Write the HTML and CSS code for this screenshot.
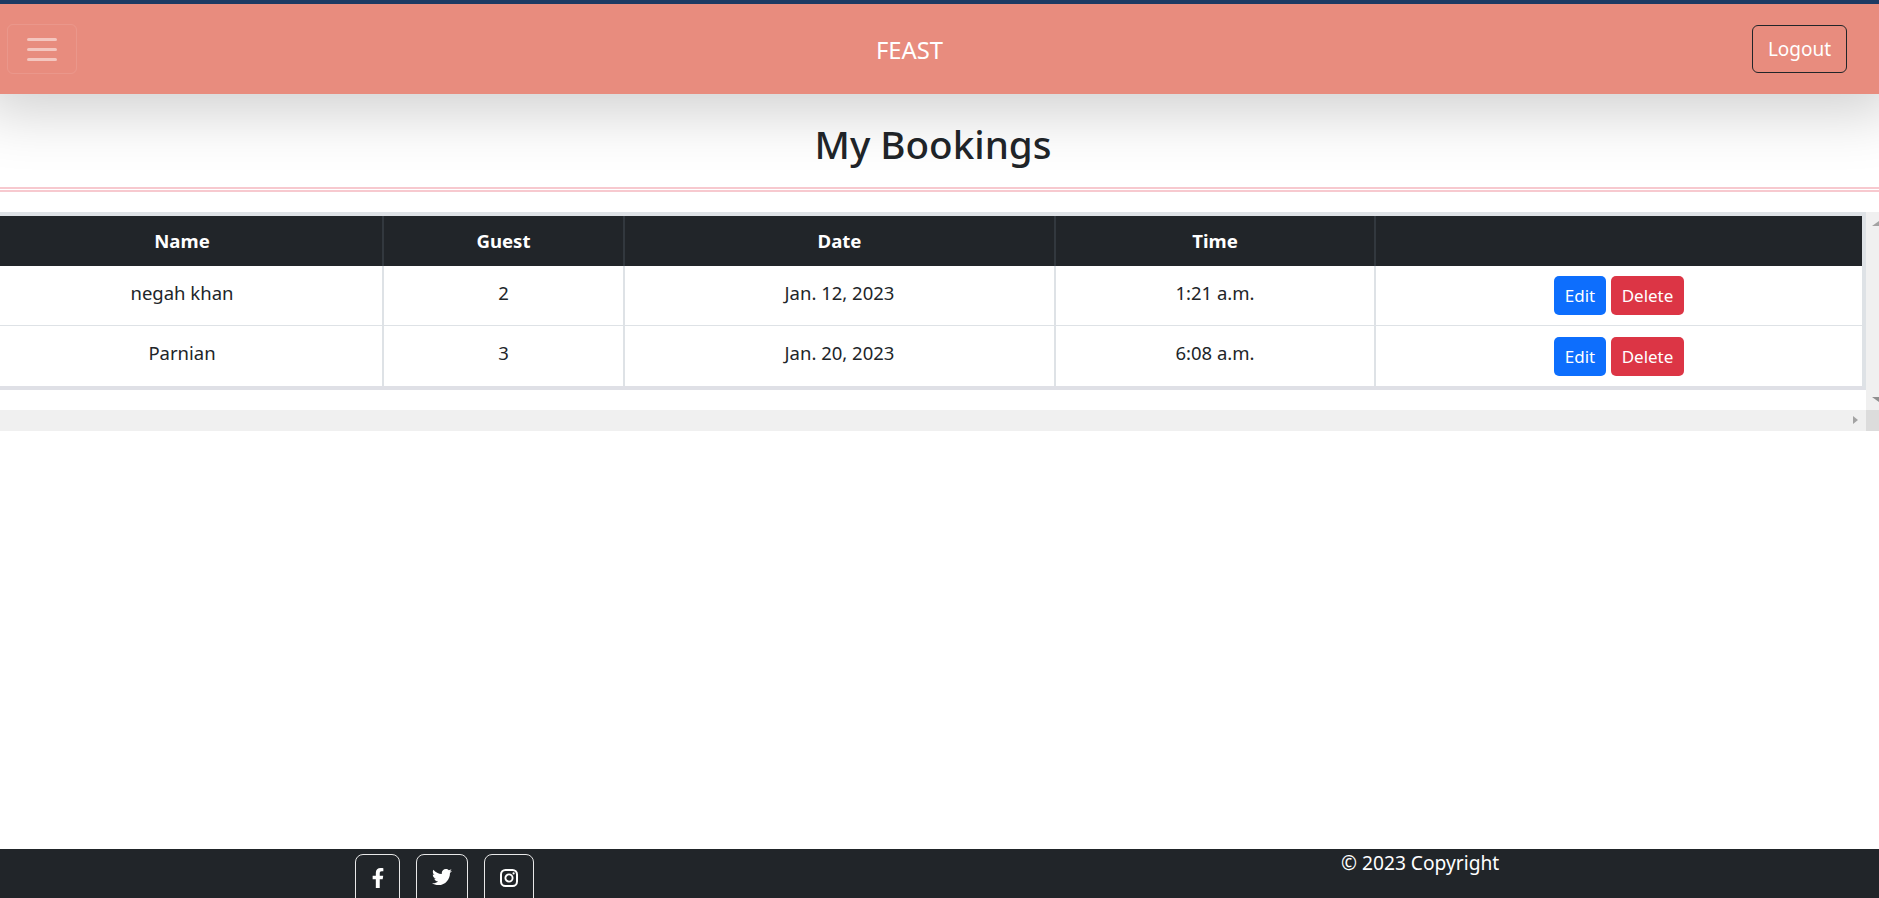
FILE: index.html
```html
<!DOCTYPE html>
<html lang="en">
<head>
<meta charset="utf-8">
<title>My Bookings</title>
<link rel="stylesheet" href="styles.css">
</head>
<body>
<header class="navbar">
  <button class="toggler" aria-label="Menu">
    <span class="bar"></span><span class="bar"></span><span class="bar"></span>
  </button>
  <a class="brand">FEAST</a>
  <button class="logout">Logout</button>
</header>
<main class="content">
  <h1 class="title">My Bookings</h1>
  <hr class="rule">
  <div class="scroller">
    <div class="pane">
      <div class="table-box">
        <table class="bookings">
          <colgroup>
            <col class="c1"><col class="c2"><col class="c3"><col class="c4"><col class="c5">
          </colgroup>
          <thead>
            <tr><th>Name</th><th>Guest</th><th>Date</th><th>Time</th><th></th></tr>
          </thead>
          <tbody>
            <tr>
              <td>negah khan</td><td>2</td><td>Jan. 12, 2023</td><td>1:21 a.m.</td>
              <td><div class="actions"><button class="btn edit">Edit</button><button class="btn del">Delete</button></div></td>
            </tr>
            <tr>
              <td>Parnian</td><td>3</td><td>Jan. 20, 2023</td><td>6:08 a.m.</td>
              <td><div class="actions"><button class="btn edit">Edit</button><button class="btn del">Delete</button></div></td>
            </tr>
          </tbody>
        </table>
      </div>
    </div>
    <div class="vbar"><span class="arrow up"></span><span class="arrow down"></span></div>
    <div class="hbar"><span class="arrow right"></span></div>
    <div class="corner"></div>
  </div>
</main>
<footer class="footer">
  <div class="social">
    <a class="soc fb"><svg class="ico" viewBox="0 0 320 512"><path fill="currentColor" d="M279.14 288l14.22-92.66h-88.91v-60.13c0-25.35 12.42-50.06 52.24-50.06h40.42V6.26S260.43 0 225.36 0c-73.22 0-121.08 44.38-121.08 124.72v70.62H22.89V288h81.39v224h100.17V288z"/></svg></a>
    <a class="soc tw"><svg class="ico" viewBox="0 0 512 512"><path fill="currentColor" d="M459.37 151.716c.325 4.548.325 9.097.325 13.645 0 138.72-105.583 298.558-298.558 298.558-59.452 0-114.68-17.219-161.137-47.106 8.447.974 16.568 1.299 25.34 1.299 49.055 0 94.213-16.568 130.274-44.832-46.132-.975-84.792-31.188-98.112-72.772 6.498.974 12.995 1.624 19.818 1.624 9.421 0 18.843-1.3 27.614-3.573-48.081-9.747-84.143-51.98-84.143-102.985v-1.299c13.969 7.797 30.214 12.67 47.431 13.319-28.264-18.843-46.781-51.005-46.781-87.391 0-19.492 5.197-37.36 14.294-52.954 51.655 63.675 129.3 105.258 216.365 109.807-1.624-7.797-2.599-15.918-2.599-24.04 0-57.828 46.782-104.934 104.934-104.934 30.213 0 57.502 12.67 76.67 33.137 23.715-4.548 46.456-13.32 66.599-25.34-7.798 24.366-24.366 44.833-46.132 57.827 21.117-2.273 41.584-8.122 60.426-16.243-14.292 20.791-32.161 39.308-52.628 54.253z"/></svg></a>
    <a class="soc ig"><svg class="ico ico-ig" viewBox="0 0 18 18"><rect x="1" y="1" width="16" height="16" rx="4.5" fill="none" stroke="currentColor" stroke-width="2"/><circle cx="9" cy="9" r="3.6" fill="none" stroke="currentColor" stroke-width="1.9"/><circle cx="13.6" cy="4.4" r="1.1" fill="currentColor"/></svg></a>
  </div>
  <p class="copy">© 2023 Copyright</p>
</footer>
</body>
</html>
```

FILE: styles.css
```css
* { box-sizing: border-box; }
html, body { height: 100%; }
body {
  margin: 0;
  height: 898px;
  display: flex;
  flex-direction: column;
  overflow: hidden;
  background: #fff;
  color: #212529;
  font-family: "Noto Sans", "Open Sans", "Liberation Sans", sans-serif;
  font-size: 18.5px;
}
button { font-family: inherit; cursor: pointer; }

.navbar {
  position: relative;
  z-index: 2;
  flex: none;
  height: 94px;
  border-top: 4px solid #1c3a63;
  background: #e88c7e;
  box-shadow: 0 0 60px 18px rgba(0, 0, 0, .19);
  display: grid;
  grid-template-columns: 1fr auto 1fr;
  align-items: center;
  padding: 0 32px 0 7px;
}
.toggler {
  justify-self: start;
  width: 70px;
  height: 50px;
  padding: 0;
  background: transparent;
  border: 1px solid rgba(255, 255, 255, .1);
  border-radius: 6px;
  display: flex;
  flex-direction: column;
  align-items: center;
  justify-content: center;
  gap: 7px;
}
.bar { width: 30px; height: 3px; border-radius: 1.5px; background: rgba(255, 255, 255, .5); }
.brand { color: #fff; font-size: 23.8px; margin: 2px 35px 0 0; }
.logout {
  justify-self: end;
  width: 95px;
  height: 48px;
  padding: 0;
  color: #fff;
  background: transparent;
  border: 1px solid #212529;
  border-radius: 6px;
  font-size: 19px;
}

.content { flex: 1; }
.title {
  margin: 0;
  height: 93px;
  padding: 19px 13px 0 0;
  text-align: center;
  font-size: 38.6px;
  font-weight: 500;
  line-height: 62px;
}
.rule { margin: 0 0 20px; height: 0; border: 0; border-top: 5px double #f7c9cf; }

.scroller {
  display: grid;
  grid-template-columns: 1fr 13px;
  grid-template-rows: 198px 21px;
}
.pane { overflow: hidden; }
.table-box {
  border-top: 4px solid #dee2e6;
  border-right: 4px solid #dee2e6;
  border-bottom: 4px solid #dfe0e6;
  overflow: hidden;
}
.bookings {
  table-layout: fixed;
  width: 1880px;
  margin-left: -18px;
  border-collapse: separate;
  border-spacing: 0;
  text-align: center;
}
.c1 { width: 402px; }
.c2 { width: 241px; }
.c3 { width: 431px; }
.c4 { width: 320px; }
.c5 { width: 486px; }
.bookings th {
  height: 50px;
  padding: 0 0 2px;
  background: #212529;
  color: #fff;
  font-weight: 700;
  font-size: 18.6px;
  border-right: 2px solid #32383e;
}
.bookings td {
  height: 60px;
  padding: 0 0 6px;
  border-right: 2px solid #dee2e6;
  border-bottom: 1px solid #dee2e6;
}
.bookings th:last-child, .bookings td:last-child { border-right: 0; }
.bookings tr:last-child td { border-bottom: 0; height: 60px; padding-bottom: 8px; }
.actions { display: flex; justify-content: center; gap: 5px; padding-top: 6px; }
.bookings tr:last-child .actions { padding-top: 8px; }
.btn {
  height: 39px;
  padding: 0;
  color: #fff;
  border: 0;
  border-radius: 5px;
  font-size: 17px;
}
.edit { width: 52px; background: #0d6efd; }
.del { width: 73px; background: #dc3545; }

.vbar {
  position: relative;
  background: #f0f0f0;
  overflow: hidden;
}
.hbar { position: relative; background: #f0f0f0; }
.corner { background: #dcdcdc; }
.arrow { position: absolute; width: 0; height: 0; border-style: solid; border-color: transparent; }
.up { left: 6px; top: 9px; border-width: 0 7px 5px; border-bottom-color: #a3a3a3; }
.down { left: 6px; bottom: 8px; border-width: 5px 7px 0; border-top-color: #8f8f8f; }
.right { right: 8px; top: 6px; border-width: 4px 0 4px 5px; border-left-color: #a3a3a3; }

.footer {
  flex: none;
  height: 49px;
  overflow: hidden;
  background: #212529;
  color: #fff;
  display: flex;
  padding-left: 355px;
}
.social { display: flex; gap: 16px; padding-top: 5px; }
.soc {
  height: 52px;
  border: 1px solid #e8e8e8;
  border-radius: 8px;
  display: flex;
  align-items: flex-start;
  justify-content: center;
  color: #fff;
}
.fb { width: 45px; padding-top: 13px; }
.tw { width: 52px; padding-top: 12px; }
.ig { width: 50px; padding-top: 14px; }
.ico { height: 20px; width: 20px; display: block; }
.ico-ig { height: 18px; width: 18px; }
.copy { margin: 0 0 0 807px; line-height: 28px; font-size: 19.2px; }
```
